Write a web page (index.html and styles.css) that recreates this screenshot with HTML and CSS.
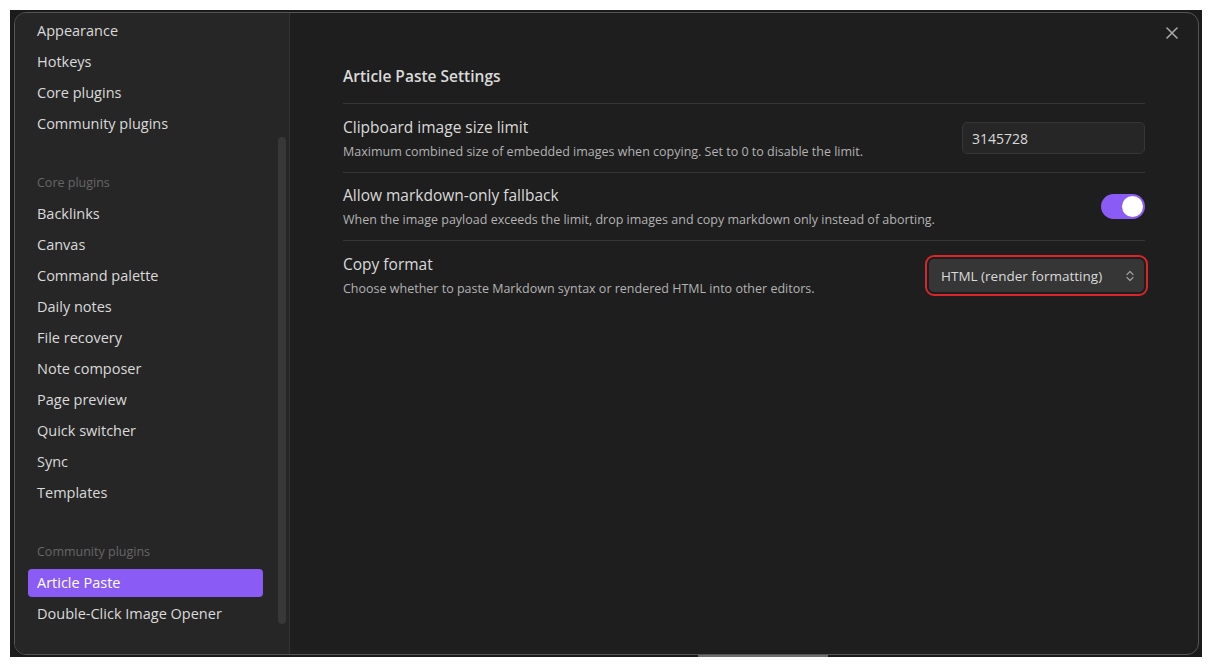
FILE: index.html
```html
<!DOCTYPE html>
<html>
<head>
<meta charset="utf-8">
<link rel="stylesheet" href="styles.css">
</head>
<body>
<div class="backdrop">
  <div class="modal">
    <nav class="sidebar">
      <div class="group">
        <div class="nav-item">Appearance</div>
        <div class="nav-item">Hotkeys</div>
        <div class="nav-item">Core plugins</div>
        <div class="nav-item">Community plugins</div>
      </div>
      <div class="group">
        <div class="group-title">Core plugins</div>
        <div class="nav-item">Backlinks</div>
        <div class="nav-item">Canvas</div>
        <div class="nav-item">Command palette</div>
        <div class="nav-item">Daily notes</div>
        <div class="nav-item">File recovery</div>
        <div class="nav-item">Note composer</div>
        <div class="nav-item">Page preview</div>
        <div class="nav-item">Quick switcher</div>
        <div class="nav-item">Sync</div>
        <div class="nav-item">Templates</div>
      </div>
      <div class="group">
        <div class="group-title">Community plugins</div>
        <div class="nav-item active">Article Paste</div>
        <div class="nav-item">Double-Click Image Opener</div>
      </div>
      <div class="scrollbar"></div>
    </nav>
    <main class="content">
      <div class="close" aria-label="Close">
        <svg width="12" height="12" viewBox="0 0 12 12"><path d="M1 1 L11 11 M11 1 L1 11" stroke="#a8a8a8" stroke-width="1.6" stroke-linecap="round" fill="none"/></svg>
      </div>
      <h2 class="heading">Article Paste Settings</h2>
      <div class="setting">
        <div class="info">
          <div class="name">Clipboard image size limit</div>
          <div class="desc">Maximum combined size of embedded images when copying. Set to 0 to disable the limit.</div>
        </div>
        <div class="control">
          <input class="text-input" type="text" value="3145728">
        </div>
      </div>
      <div class="setting">
        <div class="info">
          <div class="name">Allow markdown-only fallback</div>
          <div class="desc">When the image payload exceeds the limit, drop images and copy markdown only instead of aborting.</div>
        </div>
        <div class="control">
          <div class="toggle"><div class="knob"></div></div>
        </div>
      </div>
      <div class="setting">
        <div class="info">
          <div class="name">Copy format</div>
          <div class="desc">Choose whether to paste Markdown syntax or rendered HTML into other editors.</div>
        </div>
        <div class="control">
          <div class="dropdown">
            <span>HTML (render formatting)</span>
            <svg width="8" height="12" viewBox="0 0 8 12"><path d="M1 4.5 L4 1.5 L7 4.5 M1 7.5 L4 10.5 L7 7.5" stroke="#9a9a9a" stroke-width="1.3" fill="none" stroke-linecap="round" stroke-linejoin="round"/></svg>
          </div>
        </div>
      </div>
    </main>
  </div>
  <div class="peek"></div>
</div>
</body>
</html>
```
FILE: styles.css
```css
html, body {
  margin: 0;
  padding: 0;
  background: #ffffff;
}
body {
  padding: 10px;
  width: 1212px;
  height: 667px;
  box-sizing: border-box;
  font-family: "Open Sans", "Noto Sans", sans-serif;
  overflow: hidden;
}
.backdrop {
  width: 1192px;
  height: 647px;
  background: #1b1b1b;
  padding: 2px 0 0 4px;
  box-sizing: border-box;
}
.modal {
  width: 1185px;
  height: 643px;
  box-sizing: border-box;
  border: 1px solid #555555;
  border-radius: 12px;
  overflow: hidden;
  display: flex;
  background: #1e1e1e;
}
.sidebar {
  position: relative;
  width: 275px;
  flex: none;
  box-sizing: border-box;
  background: #262626;
  border-right: 1px solid #333333;
  padding: 4px 0 0 13px;
}
.group {
  display: flex;
  flex-direction: column;
  gap: 3px;
  margin-bottom: 31px;
}
.nav-item {
  width: 235px;
  height: 28px;
  box-sizing: border-box;
  padding-left: 9px;
  border-radius: 4px;
  font-size: 14.5px;
  line-height: 28px;
  color: #dadada;
  white-space: nowrap;
}
.nav-item.active {
  background: #8a5cf5;
  color: #ffffff;
}
.group-title {
  height: 28px;
  line-height: 27px;
  padding-left: 9px;
  font-size: 12.5px;
  color: #666666;
}
.scrollbar {
  position: absolute;
  left: 263px;
  top: 124px;
  width: 8px;
  height: 487px;
  border-radius: 4px;
  background: #383838;
}
.content {
  position: relative;
  flex: 1;
  padding: 51px 53px 0 53px;
}
.close {
  position: absolute;
  top: 14px;
  right: 20px;
  width: 12px;
  height: 12px;
  display: flex;
}
.heading {
  margin: 0;
  font-size: 15.5px;
  font-weight: 600;
  line-height: 24px;
  color: #dadada;
  padding-bottom: 15px;
  border-bottom: 1px solid #363636;
}
.setting {
  display: flex;
  align-items: center;
  height: 68.5px;
  box-sizing: border-box;
  padding: 11px 0 10px 0;
  border-bottom: 1px solid #363636;
}
.setting:last-child {
  border-bottom: none;
}
.info {
  flex: 1;
}
.name {
  font-size: 15.5px;
  line-height: 24px;
  color: #dadada;
}
.desc {
  margin-top: 3px;
  font-size: 12.5px;
  line-height: 20px;
  color: #b3b3b3;
}
.control {
  flex: none;
  display: flex;
  align-items: center;
}
.text-input {
  width: 183px;
  height: 32px;
  box-sizing: border-box;
  background: #262626;
  border: 1px solid #363636;
  border-radius: 5px;
  padding: 0 9px;
  font-family: "Open Sans", "Noto Sans", sans-serif;
  font-size: 14px;
  color: #dadada;
  outline: none;
}
.toggle {
  width: 44px;
  height: 25px;
  border-radius: 13px;
  background: #8a5cf5;
  display: flex;
  align-items: center;
  justify-content: flex-end;
  padding-right: 2px;
  box-sizing: border-box;
}
.knob {
  width: 21px;
  height: 21px;
  border-radius: 50%;
  background: #ffffff;
}
.dropdown {
  width: 215px;
  height: 33px;
  box-sizing: border-box;
  margin-right: 1px;
  background: #363636;
  border-radius: 5px;
  outline: 2px solid #d8262b;
  outline-offset: 2px;
  padding: 0 10px 0 12px;
  display: flex;
  align-items: center;
  justify-content: space-between;
  font-size: 13.5px;
  color: #dadada;
}
.peek {
  margin: 0 0 0 684px;
  width: 130px;
  height: 2px;
  background: #6e6e6e;
}
```
